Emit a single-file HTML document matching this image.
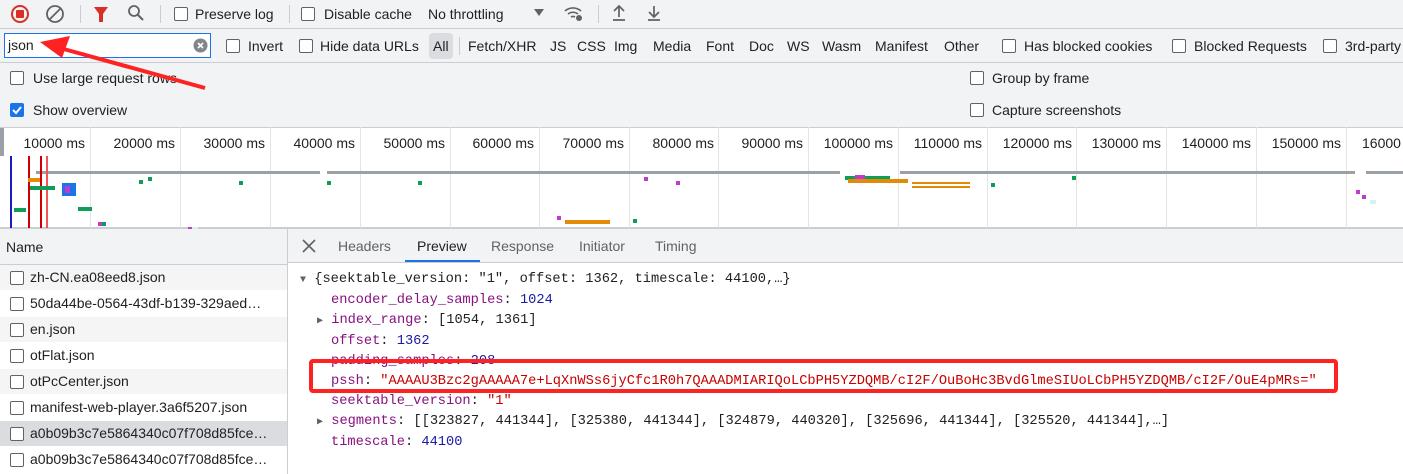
<!DOCTYPE html>
<html><head><meta charset="utf-8"><style>
*{margin:0;padding:0;box-sizing:border-box}
body{width:1403px;height:474px;overflow:hidden;background:#fff;font-family:"Liberation Sans",sans-serif;font-size:14px;color:#202124;position:relative}
.a{position:absolute;white-space:nowrap}
.cb{position:absolute;width:14px;height:14px;border:1.5px solid #5f6368;border-radius:2px;background:#fff}
.sep{position:absolute;width:1px;background:#cacdd1}
.mono{font-family:"Liberation Mono",monospace;font-size:13.7px}
.k{color:#881280}.n{color:#1a1aa6}.s{color:#c80000}
.row{position:absolute;left:0;width:287px;height:26px;border-bottom:1px solid #fff}
.row .cb{left:10px;top:6px}
.row span{position:absolute;left:30px;top:4px}
.tl{position:absolute;top:127px;height:101px;width:1px;background:#e3e3e3}
.lb{position:absolute;top:135px;font-size:14px;text-align:right;width:100px}
.b{position:absolute;height:4px}
.g{position:absolute;width:4px;height:4px;background:#0f9d58}
.p{position:absolute;width:4px;height:4px;background:#c03ad0}
.c{position:absolute;width:6px;height:4px;background:#d6f0f5}
</style></head><body>
<div class="a" style="left:0;top:0;width:1403px;height:62px;background:#f1f3f4"></div>
<div class="a" style="left:0;top:28px;width:1403px;height:1px;background:#cacdd1"></div>
<div class="a" style="left:0;top:62px;width:1403px;height:65px;background:#f1f3f4;border-top:1px solid #cacdd1"></div>
<svg class="a" style="left:10px;top:4px" width="20" height="20"><circle cx="10" cy="10" r="8" fill="none" stroke="#d93025" stroke-width="2"/><rect x="6" y="6" width="8" height="8" rx="1" fill="#d93025"/></svg>
<svg class="a" style="left:45px;top:4px" width="20" height="20"><circle cx="10" cy="10" r="8" fill="none" stroke="#5f6368" stroke-width="1.8"/><line x1="4.5" y1="15.5" x2="15.5" y2="4.5" stroke="#5f6368" stroke-width="1.8"/></svg>
<div class="sep" style="left:80px;top:5px;height:18px"></div>
<svg class="a" style="left:93px;top:5px" width="16" height="18"><path d="M1 2h14l-5 7v8h-4v-8z" fill="#d93025"/></svg>
<svg class="a" style="left:127px;top:4px" width="18" height="18"><circle cx="7" cy="7" r="5" fill="none" stroke="#5f6368" stroke-width="1.8"/><line x1="11" y1="11" x2="16" y2="16" stroke="#5f6368" stroke-width="2"/></svg>
<div class="sep" style="left:160px;top:5px;height:18px"></div>
<div class="cb" style="left:174px;top:7px"></div><span class="a" style="left:195px;top:6px">Preserve log</span>
<div class="sep" style="left:289px;top:5px;height:18px"></div>
<div class="cb" style="left:301px;top:7px"></div><span class="a" style="left:324px;top:6px">Disable cache</span>
<span class="a" style="left:428px;top:6px">No throttling</span>
<svg class="a" style="left:534px;top:9px" width="10" height="8"><path d="M0 0h10l-5 7z" fill="#5f6368"/></svg>
<svg class="a" style="left:563px;top:4px" width="22" height="18"><path d="M2 7a12 12 0 0 1 16 0M5 10a8 8 0 0 1 10 0M8 13a4 4 0 0 1 4 0" fill="none" stroke="#5f6368" stroke-width="1.6"/><circle cx="16" cy="14" r="3" fill="#5f6368"/></svg>
<div class="sep" style="left:598px;top:5px;height:18px"></div>
<svg class="a" style="left:611px;top:4px" width="16" height="18"><path d="M8 13V2M3 7l5-5 5 5M2 16h12" fill="none" stroke="#5f6368" stroke-width="1.7"/></svg>
<svg class="a" style="left:646px;top:4px" width="16" height="18"><path d="M8 2v11M3 8l5 5 5-5M2 16h12" fill="none" stroke="#5f6368" stroke-width="1.7"/></svg>
<div class="a" style="left:4px;top:33px;width:207px;height:25px;border:1.5px solid #1a73e8;background:#fff"></div>
<span class="a" style="left:8px;top:37px">json</span>
<svg class="a" style="left:193px;top:38px" width="15" height="15"><circle cx="7.5" cy="7.5" r="7" fill="#80868b"/><path d="M5 5l5 5M10 5l-5 5" stroke="#fff" stroke-width="1.6"/></svg>
<div class="cb" style="left:226px;top:39px"></div><span class="a" style="left:248px;top:38px">Invert</span>
<div class="cb" style="left:299px;top:39px"></div><span class="a" style="left:320px;top:38px">Hide data URLs</span>
<div class="a" style="left:429px;top:33px;width:24px;height:26px;background:#dadce0;border-radius:4px"></div><span class="a" style="left:433px;top:38px">All</span>
<div class="sep" style="left:459px;top:37px;height:18px"></div>
<span class="a" style="left:468px;top:38px">Fetch/XHR</span><span class="a" style="left:550px;top:38px">JS</span><span class="a" style="left:577px;top:38px">CSS</span><span class="a" style="left:614px;top:38px">Img</span><span class="a" style="left:653px;top:38px">Media</span><span class="a" style="left:706px;top:38px">Font</span><span class="a" style="left:749px;top:38px">Doc</span><span class="a" style="left:787px;top:38px">WS</span><span class="a" style="left:822px;top:38px">Wasm</span><span class="a" style="left:875px;top:38px">Manifest</span><span class="a" style="left:944px;top:38px">Other</span>
<div class="cb" style="left:1002px;top:39px"></div><span class="a" style="left:1024px;top:38px">Has blocked cookies</span>
<div class="cb" style="left:1172px;top:39px"></div><span class="a" style="left:1194px;top:38px">Blocked Requests</span>
<div class="cb" style="left:1323px;top:39px"></div><span class="a" style="left:1345px;top:38px">3rd-party</span>
<div class="cb" style="left:10px;top:71px"></div><span class="a" style="left:33px;top:70px">Use large request rows</span>
<div class="cb" style="left:10px;top:103px;background:#1a73e8;border-color:#1a73e8"></div><svg class="a" style="left:11px;top:104px" width="12" height="12"><path d="M2 6l3 3 5-6" fill="none" stroke="#fff" stroke-width="2"/></svg><span class="a" style="left:33px;top:102px">Show overview</span>
<div class="cb" style="left:970px;top:71px"></div><span class="a" style="left:992px;top:70px">Group by frame</span>
<div class="cb" style="left:970px;top:103px"></div><span class="a" style="left:992px;top:102px">Capture screenshots</span>
<div class="a" style="left:0;top:127px;width:1403px;height:102px;background:#fff;border-top:1px solid #cacdd1;border-bottom:2px solid #cacdd1"></div>
<div class="a" style="left:0;top:128px;width:4px;height:28px;background:#9aa0a6"></div>
<div class="tl" style="left:90px"></div><div class="tl" style="left:180px"></div><div class="tl" style="left:270px"></div><div class="tl" style="left:360px"></div><div class="tl" style="left:450px"></div><div class="tl" style="left:539px"></div><div class="tl" style="left:629px"></div><div class="tl" style="left:718px"></div><div class="tl" style="left:808px"></div><div class="tl" style="left:898px"></div><div class="tl" style="left:987px"></div><div class="tl" style="left:1076px"></div><div class="tl" style="left:1166px"></div><div class="tl" style="left:1256px"></div><div class="tl" style="left:1346px"></div>
<div class="lb" style="left:-15px">10000 ms</div><div class="lb" style="left:75px">20000 ms</div><div class="lb" style="left:165px">30000 ms</div><div class="lb" style="left:255px">40000 ms</div><div class="lb" style="left:345px">50000 ms</div><div class="lb" style="left:434px">60000 ms</div><div class="lb" style="left:524px">70000 ms</div><div class="lb" style="left:614px">80000 ms</div><div class="lb" style="left:703px">90000 ms</div><div class="lb" style="left:793px">100000 ms</div><div class="lb" style="left:882px">110000 ms</div><div class="lb" style="left:972px">120000 ms</div><div class="lb" style="left:1061px">130000 ms</div><div class="lb" style="left:1151px">140000 ms</div><div class="lb" style="left:1241px">150000 ms</div><span class="a" style="left:1362px;top:135px">16000</span>
<div class="b" style="left:36px;top:171px;width:284px;height:3px;background:#9aa0a6"></div>
<div class="b" style="left:327px;top:171px;width:513px;height:3px;background:#9aa0a6"></div>
<div class="b" style="left:900px;top:171px;width:455px;height:3px;background:#9aa0a6"></div>
<div class="b" style="left:1366px;top:171px;width:37px;height:3px;background:#9aa0a6"></div>
<div class="a" style="left:10px;top:156px;width:2px;height:72px;background:#1a1ac0"></div>
<div class="a" style="left:28px;top:156px;width:2px;height:72px;background:#c00"></div>
<div class="a" style="left:40px;top:156px;width:2px;height:72px;background:#c00"></div>
<div class="a" style="left:46px;top:156px;width:2px;height:72px;background:#e55"></div>
<div class="a" style="left:62px;top:183px;width:14px;height:13px;background:#1a73e8"></div>
<div class="a" style="left:65px;top:186px;width:5px;height:7px;background:#c03ad0"></div>
<div class="b" style="left:30px;top:186px;width:25px;background:#0f9d58"></div>
<div class="b" style="left:28px;top:178px;width:12px;background:#e38a0b"></div>
<div class="b" style="left:14px;top:256px;width:0"></div>
<div class="b" style="left:14px;top:256px;width:0"></div>
<div class="b" style="left:14px;top:208px;width:12px;background:#0f9d58"></div>
<div class="b" style="left:78px;top:207px;width:14px;background:#0f9d58"></div>
<div class="b" style="left:100px;top:223px;width:0"></div>
<div class="p" style="left:98px;top:222px"></div><div class="g" style="left:102px;top:222px"></div>
<div class="p" style="left:188px;top:227px"></div><div class="c" style="left:192px;top:227px"></div>
<div class="g" style="left:96px;top:241px"></div>
<div class="p" style="left:320px;top:235px"></div><div class="p" style="left:330px;top:240px"></div><div class="g" style="left:374px;top:247px"></div><div class="g" style="left:441px;top:247px"></div>
<div class="g" style="left:139px;top:180px"></div><div class="g" style="left:148px;top:177px"></div><div class="g" style="left:239px;top:181px"></div><div class="g" style="left:327px;top:181px"></div><div class="g" style="left:418px;top:181px"></div>
<div class="p" style="left:644px;top:177px"></div><div class="p" style="left:676px;top:181px"></div>
<div class="b" style="left:565px;top:220px;width:45px;background:#e38a0b"></div>
<div class="p" style="left:557px;top:216px"></div><div class="g" style="left:633px;top:219px"></div>
<div class="g" style="left:845px;top:176px;width:45px"></div>
<div class="b" style="left:848px;top:179px;width:60px;background:#e38a0b"></div>
<div class="p" style="left:855px;top:175px;width:10px"></div>
<div class="b" style="left:912px;top:182px;width:58px;height:2px;background:#e38a0b"></div>
<div class="b" style="left:912px;top:186px;width:58px;height:2px;background:#e38a0b"></div>
<div class="g" style="left:991px;top:183px"></div><div class="g" style="left:1072px;top:176px"></div>
<div class="p" style="left:1356px;top:190px"></div><div class="p" style="left:1362px;top:195px"></div><div class="c" style="left:1370px;top:200px"></div>
<div class="a" style="left:0;top:229px;width:288px;height:245px;border-right:1px solid #cacdd1"></div>
<div class="a" style="left:0;top:229px;width:287px;height:36px;background:#f1f3f4;border-bottom:1px solid #cacdd1"></div>
<span class="a" style="left:6px;top:239px">Name</span>
<div class="row" style="top:265px;background:#f5f5f5"><div class="cb"></div><span>zh-CN.ea08eed8.json</span></div>
<div class="row" style="top:291px"><div class="cb"></div><span>50da44be-0564-43df-b139-329aed…</span></div>
<div class="row" style="top:317px;background:#f5f5f5"><div class="cb"></div><span>en.json</span></div>
<div class="row" style="top:343px"><div class="cb"></div><span>otFlat.json</span></div>
<div class="row" style="top:369px;background:#f5f5f5"><div class="cb"></div><span>otPcCenter.json</span></div>
<div class="row" style="top:395px"><div class="cb"></div><span>manifest-web-player.3a6f5207.json</span></div>
<div class="row" style="top:421px;background:#dadce0"><div class="cb"></div><span>a0b09b3c7e5864340c07f708d85fce…</span></div>
<div class="row" style="top:447px"><div class="cb"></div><span>a0b09b3c7e5864340c07f708d85fce…</span></div>
<div class="a" style="left:288px;top:229px;width:1115px;height:34px;background:#f1f3f4;border-bottom:1px solid #cacdd1"></div>
<svg class="a" style="left:302px;top:239px" width="14" height="14"><path d="M1 1l12 12M13 1L1 13" stroke="#5f6368" stroke-width="1.6"/></svg>
<span class="a" style="left:338px;top:238px;color:#5f6368">Headers</span>
<span class="a" style="left:417px;top:238px">Preview</span>
<div class="a" style="left:405px;top:260px;width:75px;height:2px;background:#1a73e8"></div>
<span class="a" style="left:491px;top:238px;color:#5f6368">Response</span>
<span class="a" style="left:579px;top:238px;color:#5f6368">Initiator</span>
<span class="a" style="left:655px;top:238px;color:#5f6368">Timing</span>
<div class="a mono" style="left:300px;top:270px;line-height:20px">
<div><span style="color:#5f6368;font-size:10px">▼</span> {seektable_version: "1", offset: 1362, timescale: 44100,…}</div>
<div style="padding-left:31px"><span class="k">encoder_delay_samples</span>: <span class="n">1024</span></div>
<div style="padding-left:17px"><span style="color:#5f6368;font-size:10px">▶</span> <span class="k">index_range</span>: [1054, 1361]</div>
<div style="padding-left:31px"><span class="k">offset</span>: <span class="n">1362</span></div>
<div style="padding-left:31px"><span class="k">padding_samples</span>: <span class="n">208</span></div>
<div style="padding-left:31px"><span class="k">pssh</span>: <span class="s">"AAAAU3Bzc2gAAAAA7e+LqXnWSs6jyCfc1R0h7QAAADMIARIQoLCbPH5YZDQMB/cI2F/OuBoHc3BvdGlmeSIUoLCbPH5YZDQMB/cI2F/OuE4pMRs="</span></div>
<div style="padding-left:31px"><span class="k">seektable_version</span>: <span class="s">"1"</span></div>
<div style="padding-left:17px"><span style="color:#5f6368;font-size:10px">▶</span> <span class="k">segments</span>: [[323827, 441344], [325380, 441344], [324879, 440320], [325696, 441344], [325520, 441344],…]</div>
<div style="padding-left:31px"><span class="k">timescale</span>: <span class="n">44100</span></div>
</div>
<div class="a" style="left:309px;top:359px;width:1029px;height:34px;border:4px solid #f22;border-radius:4px"></div>
<svg class="a" style="left:0;top:0" width="220" height="100"><path d="M205 88L60 48" stroke="#f22" stroke-width="4"/><path d="M40 42l30-6-8 22z" fill="#f22"/></svg>
</body></html>
